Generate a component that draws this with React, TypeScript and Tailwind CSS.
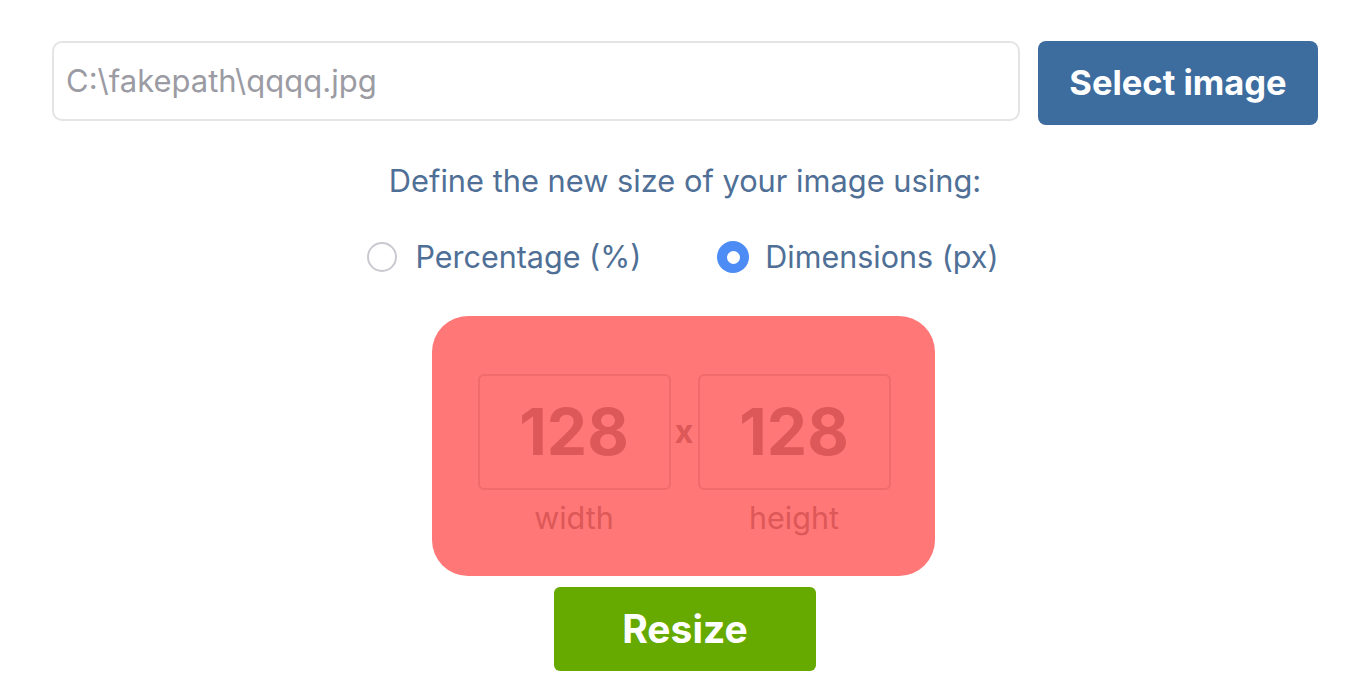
import React from "react";

export default function App() {
  const font = { fontFamily: "Inter, 'Noto Sans', sans-serif" };
  return (
    <div className="w-[1366px] h-[689px] bg-white overflow-hidden" style={font}>
      <div className="flex items-start pl-[52px] pr-[48px] pt-[41px] gap-[18px]">
        <div className="flex-1 h-[80px] border-2 border-[#e4e4e4] rounded-[10px] flex items-center pl-[12px] text-[31px] text-[#9b9ba3]">
          C:\fakepath\qqqq.jpg
        </div>
        <button className="w-[280px] h-[84px] bg-[#3d6c9e] rounded-[8px] text-white font-bold text-[34.5px] flex items-center justify-center">
          Select image
        </button>
      </div>

      <div className="flex justify-center mt-[36px] pl-[4px] text-[30.8px] text-[#4f6f96] leading-[40px]">
        Define the new size of your image using:
      </div>

      <div className="flex justify-center items-center mt-[36px] text-[30.5px] text-[#4f6f96] leading-[40px]">
        <div className="flex items-center">
          <span className="w-[30px] h-[30px] rounded-full border-2 border-[#c9c9d1] bg-white" />
          <span className="ml-[18px]">Percentage (%)</span>
        </div>
        <div className="flex items-center ml-[76px]">
          <span className="w-[32px] h-[32px] rounded-full bg-[#4d8cf5] flex items-center justify-center">
            <span className="w-[13px] h-[13px] rounded-full bg-white" />
          </span>
          <span className="ml-[16px]">Dimensions (px)</span>
        </div>
      </div>

      <div className="flex justify-center mt-[39px]">
        <div className="w-[503px] h-[260px] bg-[#ff7777] rounded-[36px] pt-[58px] pl-[46px]">
          <div className="flex items-center">
            <div className="w-[193px] h-[116px] border-2 border-[#f06b6b] rounded-[6px] flex items-center justify-center text-[64px] font-bold text-[#dd5858]">
              128
            </div>
            <div className="w-[27px] text-center text-[32px] font-bold text-[#dd5858]">x</div>
            <div className="w-[193px] h-[116px] border-2 border-[#f06b6b] rounded-[6px] flex items-center justify-center text-[64px] font-bold text-[#dd5858]">
              128
            </div>
          </div>
          <div className="flex mt-[10px] text-[30.5px] text-[#dd5858] leading-[36px]">
            <div className="w-[193px] text-center">width</div>
            <div className="w-[27px]" />
            <div className="w-[193px] text-center">height</div>
          </div>
        </div>
      </div>

      <div className="flex justify-center mt-[11px] pl-[4px]">
        <button className="w-[262px] h-[84px] bg-[#66aa00] rounded-[6px] text-white font-bold text-[39px] flex items-center justify-center">
          Resize
        </button>
      </div>
    </div>
  );
}
